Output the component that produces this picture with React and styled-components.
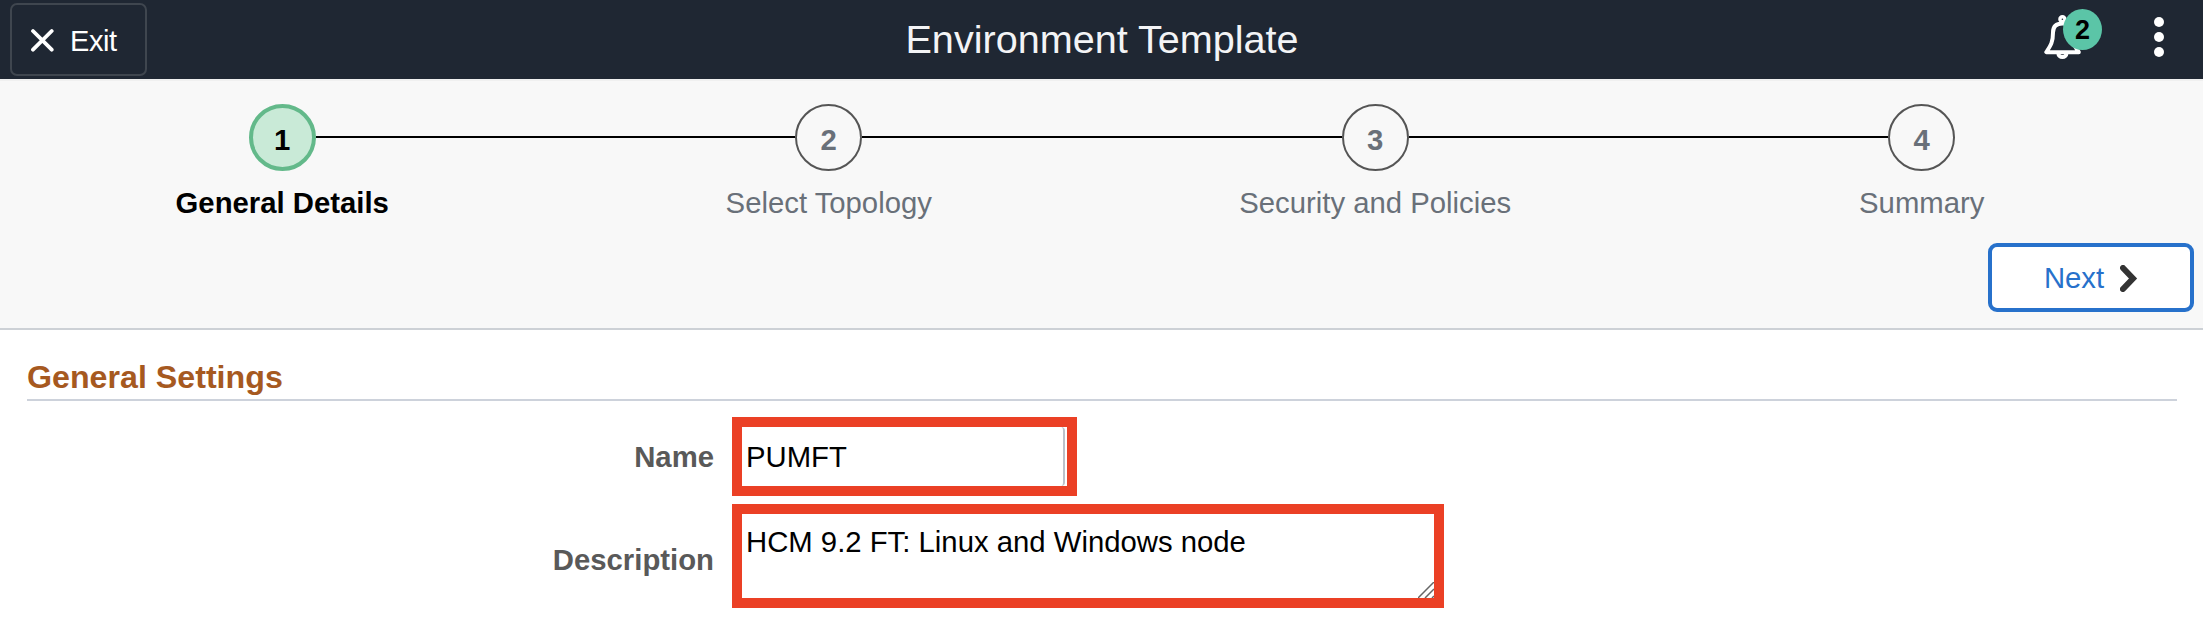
import React from "react";
import styled, { createGlobalStyle } from "styled-components";

const Global = createGlobalStyle`
  *, *::before, *::after { box-sizing: border-box; }
  body { margin: 0; background: #fff; font-family: "Liberation Sans", Arial, sans-serif; font-size: 29.3px; color: #000; }
`;

const Header = styled.header`
  display: grid;
  grid-template-columns: 1fr auto 1fr;
  align-items: center;
  height: 81px;
  padding: 0 10px;
  background: #1f2733;
  border-bottom: 2px solid #f0f0f0;
  color: #fff;
`;

const ExitButton = styled.button`
  display: flex;
  align-items: center;
  gap: 16px;
  width: 137px;
  height: 73px;
  padding: 3px 0 0 18px;
  border: 2px solid #3f464f;
  border-radius: 7px;
  background: transparent;
  color: #fff;
  font: inherit;
  font-size: 29px;
  letter-spacing: -0.4px;
  svg { margin-top: -2px; }
`;

const Title = styled.h1`
  margin: -1px 0 0 1px;
  color: #f3f4f6;
  font-size: 39.6px;
  font-weight: 400;
  line-height: 46px;
`;

const Actions = styled.div`
  display: flex;
  justify-content: flex-end;
  align-items: flex-start;
  gap: 52px;
  height: 61px;
  padding-right: 29px;
`;

const Notifications = styled.div`
  position: relative;
  width: 58px;
  height: 61px;
`;

const Badge = styled.span`
  position: absolute;
  left: 19px;
  top: 0;
  width: 39px;
  height: 41px;
  border-radius: 50%;
  background: #5bc5a7;
  color: #000;
  font-size: 27px;
  font-weight: 700;
  line-height: 43px;
  text-align: center;
`;

const Wizard = styled.section`
  height: 249px;
  padding: 23px 8px 0 9px;
  background: #f8f8f8;
  border-bottom: 2px solid #cdd1d6;
`;

const Steps = styled.ol`
  display: grid;
  grid-template-columns: repeat(4, 1fr);
  margin: 0;
  padding: 0;
  list-style: none;
`;

const Step = styled.li`
  display: flex;
  flex-direction: column;
  color: ${(p) => (p.$active ? "#000" : "#697079")};
`;

const Track = styled.div`
  display: flex;
  align-items: center;
`;

const Line = styled.span`
  flex: 1;
  height: 2px;
  margin-top: -1px;
  background: ${(p) => (p.$hidden ? "transparent" : "#000")};
`;

const Circle = styled.span`
  width: 67px;
  height: 67px;
  border: ${(p) => (p.$active ? "4px solid #63b98a" : "2px solid #555")};
  border-radius: 50%;
  background: ${(p) => (p.$active ? "#c9ead7" : "transparent")};
  font-weight: 700;
  line-height: ${(p) => (p.$active ? "64px" : "68px")};
  text-align: center;
`;

const StepLabel = styled.span`
  margin-top: 14px;
  font-weight: ${(p) => (p.$active ? 700 : 400)};
  line-height: 36px;
  text-align: center;
`;

const ButtonRow = styled.div`
  display: flex;
  justify-content: flex-end;
  margin-top: 22px;
`;

const NextButton = styled.button`
  display: flex;
  align-items: center;
  justify-content: center;
  gap: 16px;
  width: 206px;
  height: 69px;
  padding: 0;
  border: 4px solid #2771cb;
  border-radius: 9px;
  background: #fff;
  color: #2771cb;
  font: inherit;
  margin-right: 1px;
  svg { margin-top: 2px; }
`;

const Settings = styled.main`
  padding: 30px 26px 0 27px;
`;

const SectionTitle = styled.h2`
  height: 41px;
  margin: 0;
  border-bottom: 2px solid #cdd2db;
  color: #a6591f;
  font-size: 32.2px;
  font-weight: 700;
  line-height: 34px;
`;

const Form = styled.div`
  display: flex;
  flex-direction: column;
  gap: 8px;
  padding-top: 16px;
`;

const Field = styled.label`
  display: grid;
  grid-template-columns: 687px auto;
  justify-content: start;
  align-items: center;
  column-gap: 18px;
`;

const FieldLabel = styled.span`
  padding-top: ${(p) => p.$drop || 0}px;
  color: #595959;
  font-weight: 700;
  text-align: right;
`;

const Highlight = styled.div`
  display: flex;
  width: ${(p) => p.$width}px;
  height: ${(p) => p.$height}px;
  border: 10px solid #eb4025;
  box-shadow: ${(p) => (p.$shadow ? "0 1px 0 #b9a9a8" : "none")};
`;

const NameInput = styled.input`
  width: 323px;
  height: 59px;
  padding: 1px 0 0 4px;
  border: 0;
  border-right: 2px solid #bcc1ca;
  border-radius: 0 4px 4px 0;
  outline: 0;
  font: inherit;
`;

const DescriptionBox = styled.div`
  display: flex;
  align-items: flex-end;
  width: 692px;
  height: 84px;
`;

const DescriptionInput = styled.textarea`
  flex: 1;
  height: 84px;
  padding: 10px 0 0 4px;
  border: 0;
  outline: 0;
  resize: none;
  overflow: hidden;
  font: inherit;
  line-height: 36px;
`;

const Grip = styled.svg`
  flex: none;
`;

const steps = ["General Details", "Select Topology", "Security and Policies", "Summary"];

export default function App() {
  return (
    <>
      <Global />
      <Header>
        <ExitButton>
          <svg width="24" height="24" viewBox="0 0 24 24" stroke="#fff" strokeWidth="3.8" strokeLinecap="round">
            <path d="M3 3 21.700 21.700M21.700 3 3 21.700" />
          </svg>
          Exit
        </ExitButton>
        <Title>Environment Template</Title>
        <Actions>
          <Notifications>
            <svg width="40" height="52" viewBox="0 0 40 52" fill="none" stroke="#fff" strokeWidth="4" strokeLinejoin="round" strokeLinecap="round">
              <circle cx="18.400" cy="10.200" r="2.500" strokeWidth="3.400" />
              <path d="M18.400 14.500C12 14.500 9 18 9 23.500C9 33 7 36 2.300 43.200H34.800C30 36 28 33 28 23.500C28 18 25 14.500 18.400 14.500Z" />
              <path d="M14.400 44.500A4 3.600 0 0 0 22.400 44.500" />
            </svg>
            <Badge>2</Badge>
          </Notifications>
          <svg width="10" height="50" viewBox="0 0 10 50" fill="#fff">
            <circle cx="5" cy="13" r="5" />
            <circle cx="5" cy="28" r="5" />
            <circle cx="5" cy="43" r="5" />
          </svg>
        </Actions>
      </Header>
      <Wizard>
        <Steps>
          {steps.map((label, i) => (
            <Step key={label} $active={i === 0}>
              <Track>
                <Line $hidden={i === 0} />
                <Circle $active={i === 0}>{i + 1}</Circle>
                <Line $hidden={i === steps.length - 1} />
              </Track>
              <StepLabel $active={i === 0}>{label}</StepLabel>
            </Step>
          ))}
        </Steps>
        <ButtonRow>
          <NextButton>
            Next
            <svg width="18" height="27" viewBox="0 0 18 27" fill="none" stroke="#333" strokeWidth="6">
              <path d="M3 3 13 13.500 3 24" strokeLinecap="round" />
            </svg>
          </NextButton>
        </ButtonRow>
      </Wizard>
      <Settings>
        <SectionTitle>General Settings</SectionTitle>
        <Form>
          <Field>
            <FieldLabel>Name</FieldLabel>
            <Highlight $width={345} $height={79}>
              <NameInput defaultValue="PUMFT" />
            </Highlight>
          </Field>
          <Field>
            <FieldLabel $drop={8}>Description</FieldLabel>
            <Highlight $width={712} $height={104} $shadow>
              <DescriptionBox>
                <DescriptionInput defaultValue="HCM 9.2 FT: Linux and Windows node" />
                <Grip width="16" height="16" viewBox="0 0 16 16" stroke="#666" strokeWidth="1.5">
                  <path d="M0 16 16 0M7 16 16 7M14 16 16 14" />
                </Grip>
              </DescriptionBox>
            </Highlight>
          </Field>
        </Form>
      </Settings>
    </>
  );
}
